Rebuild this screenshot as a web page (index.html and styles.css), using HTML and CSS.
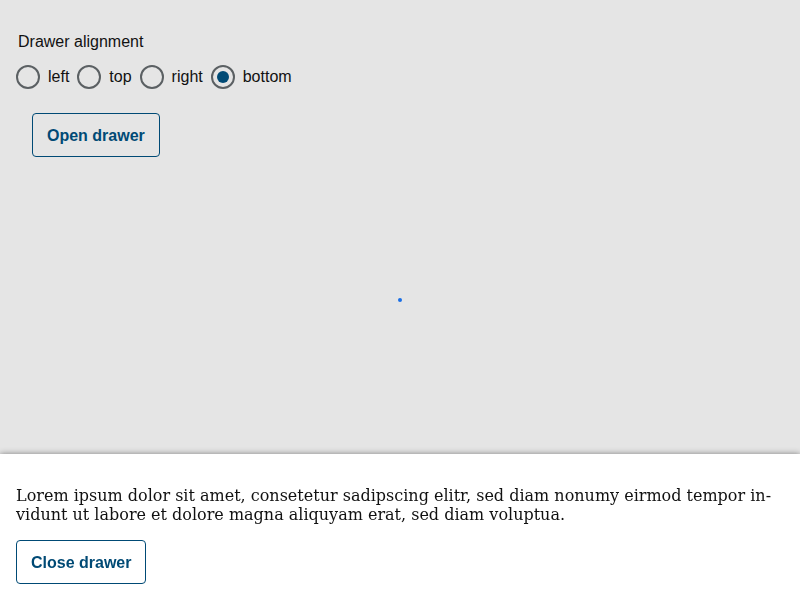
FILE: index.html
```html
<!DOCTYPE html>
<html lang="en">
<head>
<meta charset="utf-8">
<title>Drawer</title>
<link rel="stylesheet" href="styles.css">
</head>
<body>
<div class="controls">
  <div class="group-label">Drawer alignment</div>
  <div class="radios">
    <label class="radio"><span class="circle"></span><span class="radio-text">left</span></label>
    <label class="radio"><span class="circle"></span><span class="radio-text">top</span></label>
    <label class="radio"><span class="circle"></span><span class="radio-text">right</span></label>
    <label class="radio"><span class="circle checked"></span><span class="radio-text">bottom</span></label>
  </div>
  <button class="btn open-btn">Open drawer</button>
</div>
<div class="focus-dot"></div>
<div class="drawer">
  <p class="drawer-text">Lorem ipsum dolor sit amet, consetetur sadipscing elitr, sed diam nonumy eirmod tempor in&shy;vidunt ut labore et dolore magna aliquyam erat, sed diam voluptua.</p>
  <button class="btn">Close drawer</button>
</div>
</body>
</html>
```
FILE: styles.css
```css
html, body {
  margin: 0;
  height: 100%;
}
body {
  background: #e5e5e5;
  font-family: "Liberation Sans", Arial, sans-serif;
  font-size: 16px;
  color: #111;
  overflow: hidden;
}
.controls {
  padding: 33px 16px 0;
}
.group-label {
  margin-left: 2px;
  line-height: 18px;
}
.radios {
  display: flex;
  align-items: center;
  gap: 8px;
  margin-top: 14px;
}
.radio {
  display: flex;
  align-items: center;
  gap: 8px;
}
.circle {
  width: 24px;
  height: 24px;
  box-sizing: border-box;
  border: 2px solid #5b6063;
  border-radius: 50%;
  display: flex;
  align-items: center;
  justify-content: center;
}
.circle.checked::after {
  content: "";
  width: 12px;
  height: 12px;
  border-radius: 50%;
  background: #004a75;
}
.radio-text {
  line-height: 18px;
  color: #111;
}
.btn {
  font-family: "Liberation Sans", Arial, sans-serif;
  font-size: 16px;
  font-weight: bold;
  color: #004a75;
  background: transparent;
  border: 1px solid #004a75;
  border-radius: 4px;
  padding: 13px 14px 11px;
  line-height: 18px;
  height: 44px;
  box-sizing: border-box;
}
.open-btn {
  margin-top: 24px;
  margin-left: 16px;
}
.focus-dot {
  position: absolute;
  left: 398px;
  top: 298px;
  width: 4px;
  height: 4px;
  border-radius: 50%;
  background: #1a6fe6;
}
.drawer {
  position: fixed;
  left: 0;
  right: 0;
  bottom: 0;
  background: #fff;
  padding: 16px;
  box-shadow: 0 0 6px rgba(0, 0, 0, 0.45);
}
.drawer-text {
  font-family: "DejaVu Serif", serif;
  font-size: 16px;
  line-height: 19px;
  margin: 16px 0;
  color: #111;
}
.drawer .btn {
  display: block;
}
```
